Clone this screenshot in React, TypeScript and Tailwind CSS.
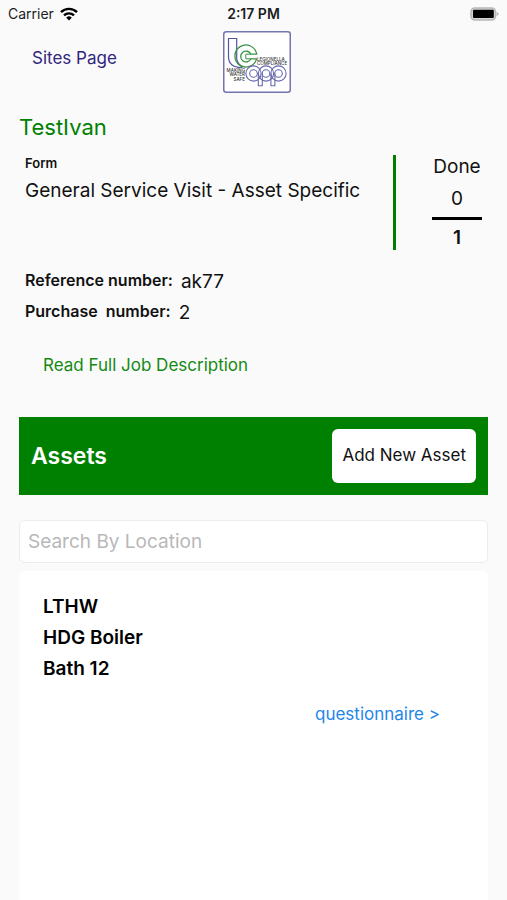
import { useState } from "react";

const details = [
  { label: "Reference number:", value: "ak77" },
  { label: "Purchase  number:", value: "2" },
];

const assets = [{ system: "LTHW", name: "HDG Boiler", location: "Bath 12" }];

const StatusBar = () => (
  <div className="grid h-7 grid-cols-3 items-center px-2 text-sm text-[#1c1c1e]">
    <div className="flex items-center gap-1.5">
      <span>Carrier</span>
      <svg viewBox="0 0 18 14" className="h-3.5 w-[18px]" fill="none" stroke="#000" strokeWidth="2.4">
        <path d="M1 5.2a11.4 11.4 0 0 1 16 0" />
        <path d="M4 8.4a7.2 7.2 0 0 1 10 0" />
        <path d="M9 13.6 6.2 10.7a4 4 0 0 1 5.6 0Z" fill="#000" stroke="none" />
      </svg>
    </div>
    <span className="text-center font-semibold">2:17 PM</span>
    <svg viewBox="0 0 30 14" className="h-3.5 w-[30px] justify-self-end">
      <rect x="2" y="1" width="24.5" height="12" rx="4" fill="#d6d6d6" stroke="#b8b8b8" strokeWidth="1.6" />
      <rect x="4" y="2.8" width="20.8" height="8.2" rx="1" fill="#000" />
      <path d="M27.6 4.4 30 7l-2.4 2.6Z" fill="#b8b8b8" />
    </svg>
  </div>
);

const Logo = () => (
  <svg viewBox="0 0 68 62" className="h-[62px] w-[68px]" role="img" aria-label="LC App" fill="none">
    <rect x="0.75" y="0.75" width="66.5" height="60.5" rx="2.5" fill="#fff" stroke="#7474ae" strokeWidth="1.5" />
    {/* stem and foot of the l */}
    <path d="M5.5 7.5h8.2V27q0 5 5 8.5v1q-13.200 0-13.200-11Z" stroke="#5454a0" strokeWidth="1.2" />
    {/* ring of the c */}
    <path
      d="M33.800 23.200a11 11 0 1 0-.2 4.600h-5.600a5.400 5.400 0 1 1 0-4.600Z"
      stroke="#3a9146"
      strokeWidth="1.300"
      strokeLinejoin="round"
    />
    <path d="M28 23.200h-5.200v4.600H28" stroke="#3a9146" />
    {/* overlapping rings of app */}
    <g stroke="#6868ae" strokeWidth="1.100">
      <circle cx="30.500" cy="42.500" r="7.600" />
      <circle cx="30.500" cy="42.500" r="3.800" />
      <circle cx="43" cy="42.500" r="7.600" />
      <circle cx="43" cy="42.500" r="3.800" />
      <path d="M35.300 42.500v12.300h4V42.500" />
      <circle cx="55.500" cy="42.500" r="7.600" />
      <circle cx="55.500" cy="42.500" r="3.800" />
      <path d="M47.900 42.500v12.300h4V42.500" />
    </g>
    <g fill="#333" fontFamily="Inter, sans-serif" fontSize="4.500" fontWeight="500">
      <text x="34" y="30">LEGIONELLA</text>
      <text x="34" y="34.200">COMPLIANCE</text>
      <g textAnchor="end">
        <text x="22" y="40.500">MAKING</text>
        <text x="22" y="45">WATER</text>
        <text x="22" y="49.500">SAFE</text>
      </g>
    </g>
  </svg>
);

export default function App() {
  const [search, setSearch] = useState("");

  return (
    <div className="flex min-h-screen flex-col bg-[#fafafa] font-['Inter',sans-serif] text-[#111]">
      <StatusBar />

      <header className="grid grid-cols-3 items-center pt-[3px] pl-2">
        <a href="#sites" className="pb-1.5 pl-6 text-[17px] text-[#32257f]">
          Sites Page
        </a>
        <div className="flex justify-center">
          <Logo />
        </div>
      </header>

      <main className="flex flex-1 flex-col px-[19px] pt-[18px]">
        <h1 className="text-[22px] leading-8 text-[#008000]">TestIvan</h1>

        {/* Form + progress */}
        <section className="mt-3 flex justify-between pl-1.5">
          <div>
            <p className="text-[13px] leading-4 font-semibold">Form</p>
            <p className="mt-1 text-[19px] leading-8">General Service Visit - Asset Specific</p>
          </div>
          <div className="flex shrink-0 border-l-3 border-[#008000] pr-1.5 pl-9">
            <div className="flex flex-col items-center">
              <span className="text-[19px] leading-6">Done</span>
              <span className="mt-2 text-[19px] leading-6">0</span>
              <span className="mt-1.5 h-[3px] w-[50px] bg-black" />
              <span className="mt-1.5 text-[19px] leading-6 font-semibold">1</span>
            </div>
          </div>
        </section>

        {/* Job details */}
        <dl className="mt-[18px] pl-1.5">
          {details.map((detail) => (
            <div key={detail.label} className="flex h-[31px] items-start gap-2">
              <dt className="text-base leading-6 font-semibold whitespace-pre">{detail.label}</dt>
              <dd className="text-[19px] leading-7">{detail.value}</dd>
            </div>
          ))}
        </dl>
        <a href="#description" className="mt-[23px] self-start pl-6 text-[17px] leading-6 text-[#138a13]">
          Read Full Job Description
        </a>

        {/* Assets */}
        <div className="mt-10 flex h-[78px] items-center justify-between bg-[#008000] px-3">
          <h2 className="text-[23px] font-semibold text-white">Assets</h2>
          <button type="button" className="h-[54px] rounded-md bg-white px-2.5 text-[17px]">
            Add New Asset
          </button>
        </div>
        <input
          type="text"
          aria-label="Search By Location"
          placeholder="Search By Location"
          value={search}
          onChange={(e) => setSearch(e.target.value)}
          className="mt-[25px] h-[43px] rounded-md border border-[#ececec] bg-white px-2 text-[19px] placeholder:text-[#b8b8b8]"
        />

        <ul className="mt-2 flex-1 rounded-t-md bg-white">
          {assets.map((asset) => (
            <li key={asset.name} className="flex flex-col px-6 pt-5">
              <div className="text-[19px] leading-[31px] font-semibold text-black">
                <p>{asset.system}</p>
                <p>{asset.name}</p>
                <p>{asset.location}</p>
              </div>
              <a href="#questionnaire" className="mt-[18px] mr-6 self-end text-[17px] leading-6 text-[#1f86ea]">
                questionnaire &gt;
              </a>
            </li>
          ))}
        </ul>
      </main>
    </div>
  );
}
